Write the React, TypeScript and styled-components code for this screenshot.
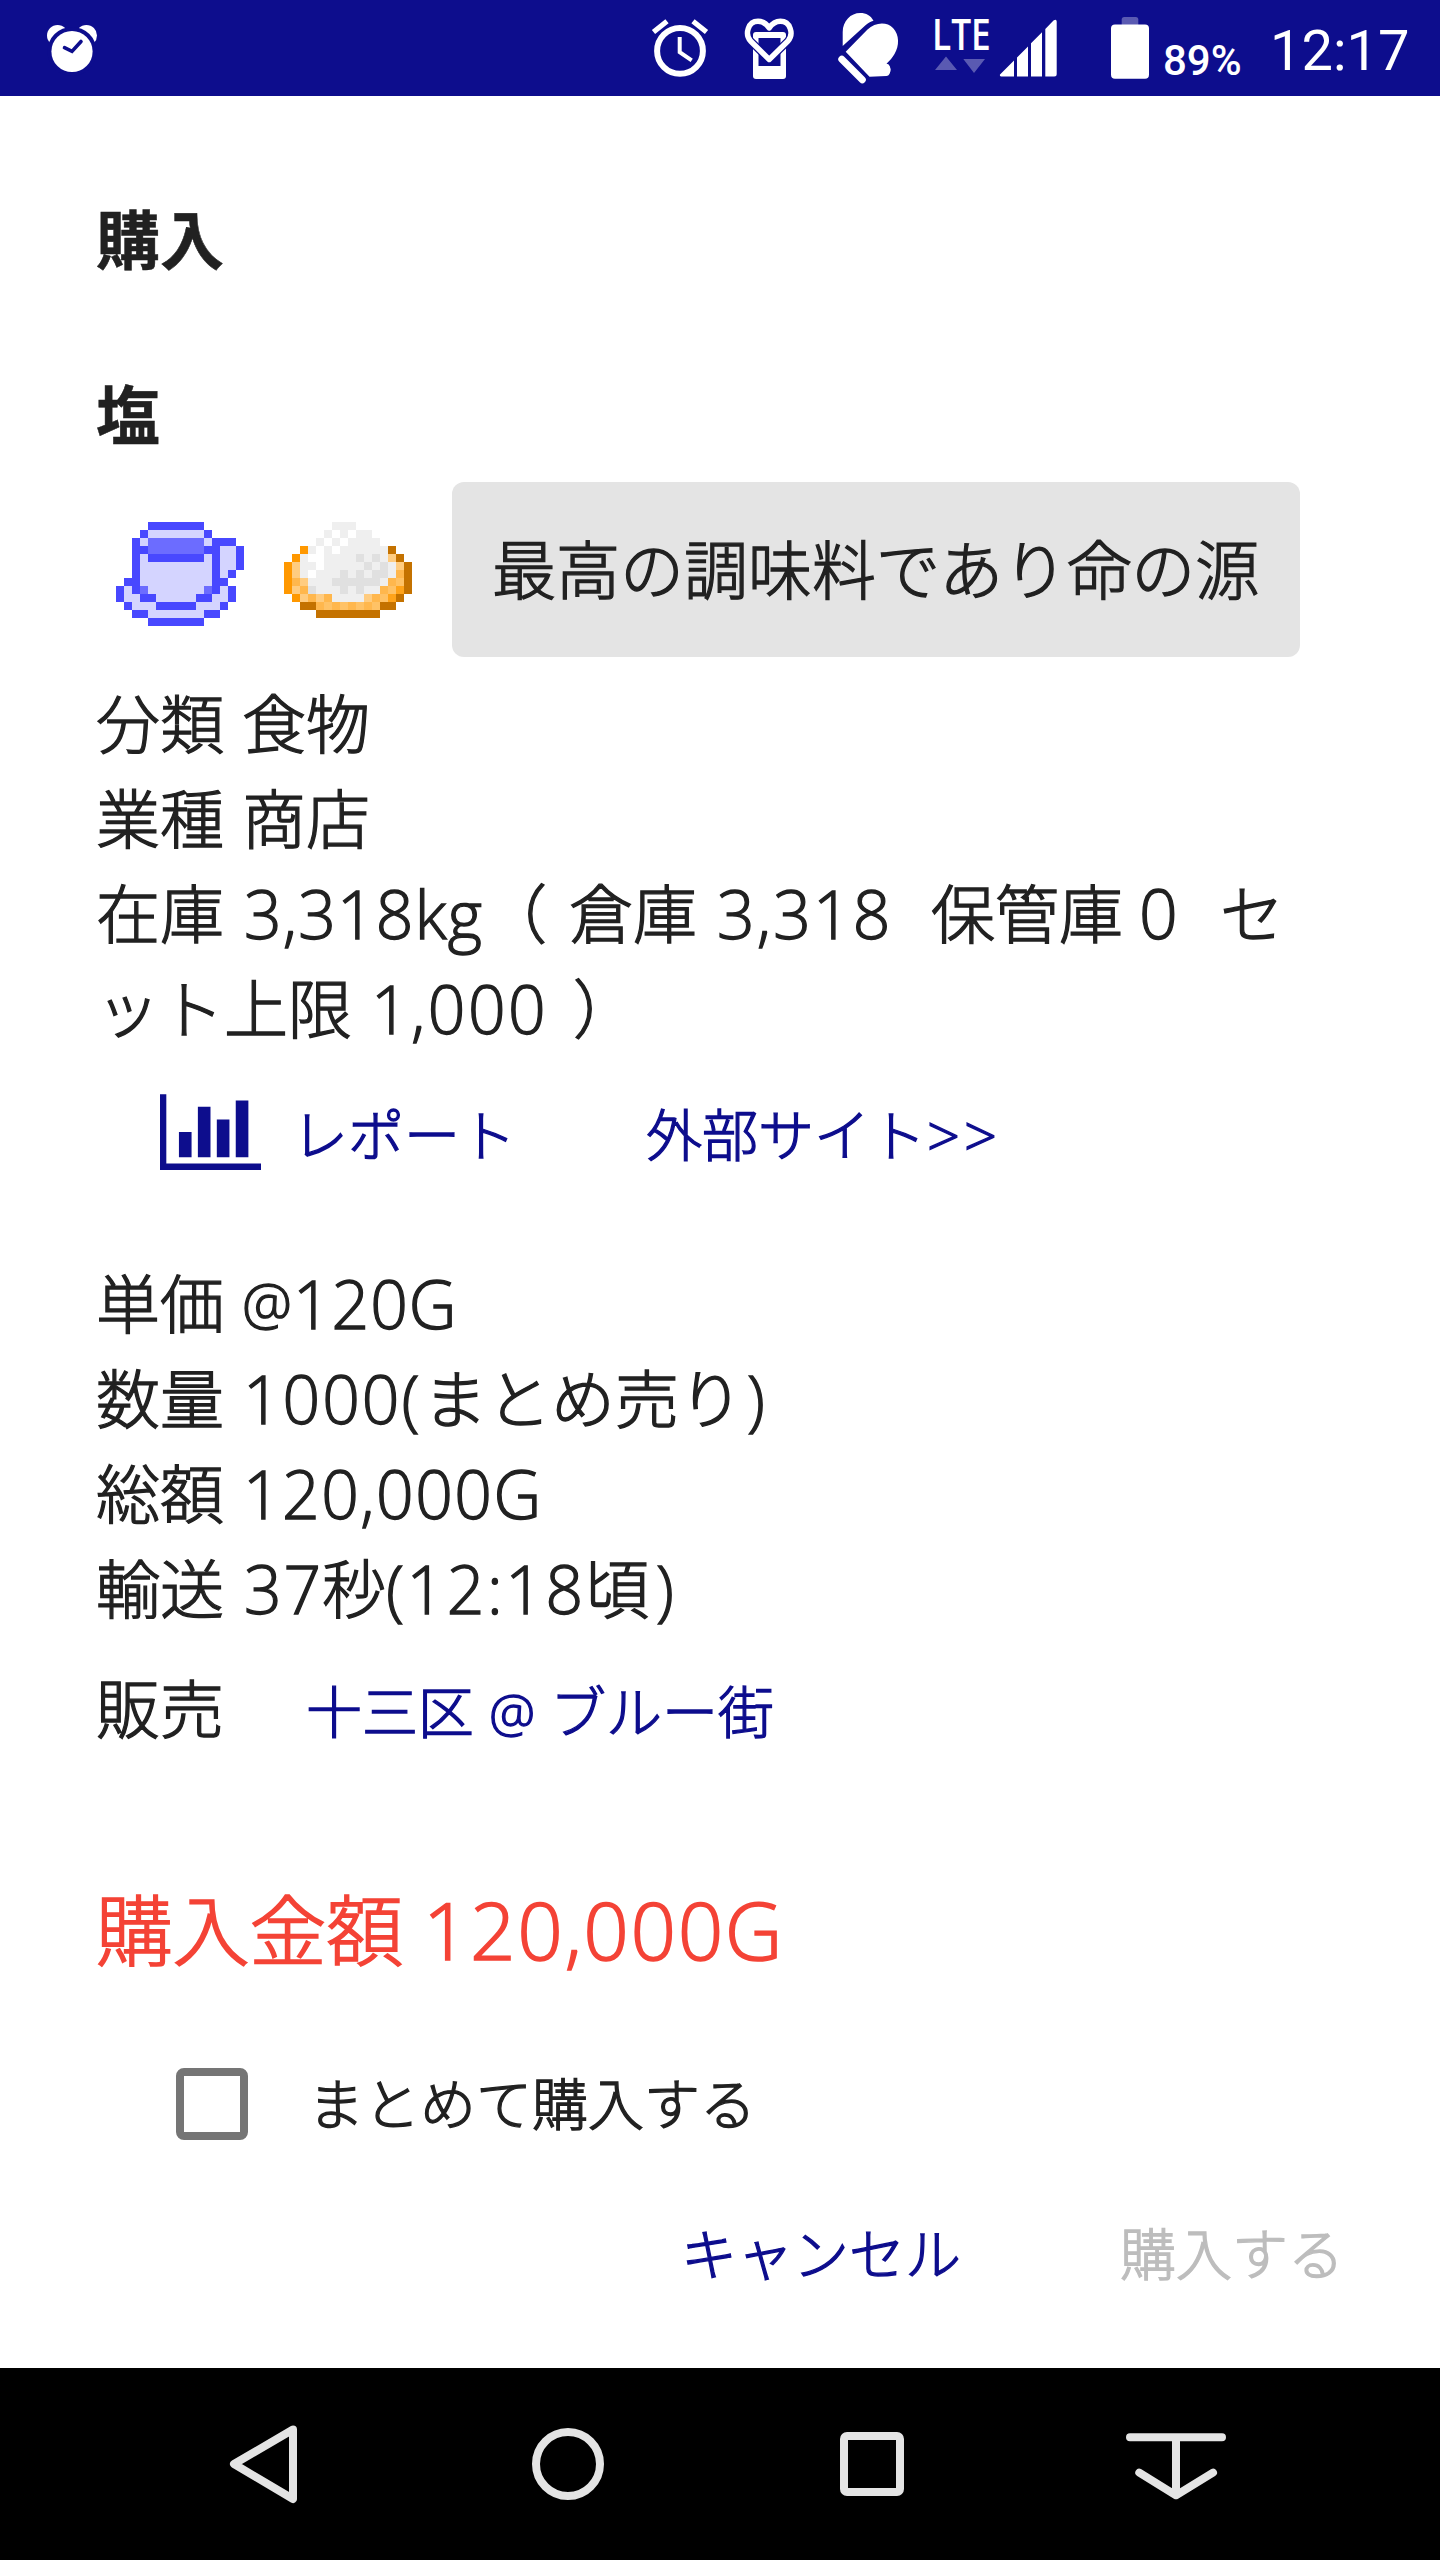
import React from 'react';
import styled, { createGlobalStyle } from 'styled-components';

const INK = '#212121';
const NAVY = '#0d0d8d';
const FAINT = '#5a5ab2';

const GlobalStyle = createGlobalStyle`
  * { box-sizing: border-box; }
  body { margin: 0; background: #fff; }
`;

const Screen = styled.div`
  display: flex;
  flex-direction: column;
  width: 1440px;
  height: 2560px;
  background: #fff;
  color: ${INK};
  font-family: 'Noto Sans CJK JP', sans-serif;
  font-weight: 300;
`;

/* ---------- status bar ---------- */

const StatusBar = styled.header`
  display: flex;
  height: 96px;
  padding: 0 30px 0 40px;
  background: ${NAVY};
  color: #fff;
  font-family: Roboto, sans-serif;
`;

const StatusIcon = styled.svg<{ $gap?: number }>`
  display: block;
  flex: none;
  margin-left: ${(p) => p.$gap ?? 0}px;
`;

const Spacer = styled.div`
  flex: 1;
`;

const Network = styled.div`
  display: flex;
  flex-direction: column;
  width: 60px;
  margin-left: 24px;
  padding-top: 14px;
`;

const NetworkType = styled.span`
  height: 42px;
  font: 600 43px/40px 'Open Sans', sans-serif;
  transform: scaleX(0.82);
  transform-origin: 0 50%;
  white-space: nowrap;
`;

const Percent = styled.span`
  width: 80px;
  margin-left: 11px;
  padding-top: 36px;
  font-size: 42px;
  font-weight: 500;
  line-height: 50px;
`;

const Clock = styled.span`
  width: 140px;
  margin-left: 27px;
  padding-top: 21px;
  font-size: 56px;
  font-weight: 400;
  line-height: 60px;
  white-space: nowrap;
`;

/* ---------- dialog ---------- */

const Dialog = styled.main`
  display: flex;
  flex-direction: column;
  height: 2272px;
  padding: 92px 96px 0;
  -webkit-text-stroke: 1.3px currentColor;
`;

const Heading = styled.h1<{ $gap?: number }>`
  margin: ${(p) => p.$gap ?? 0}px 0 0;
  font-size: 64px;
  font-weight: 700;
  line-height: 96px;
  -webkit-text-stroke: 0.5px currentColor;
`;

const ItemRow = styled.div`
  display: flex;
  align-items: flex-start;
  height: 175px;
  margin-top: 23px;
  padding-left: 20px;
`;

const Sprite = styled.svg`
  display: block;
  flex: none;
  width: 128px;
  height: 104px;
  margin: 40px 40px 0 0;
`;

const Note = styled.p`
  width: 848px;
  height: 175px;
  margin: 0;
  padding: 0 40px;
  border-radius: 12px;
  background: #e4e4e4;
  font-size: 64px;
  line-height: 168px;
  white-space: nowrap;
`;

const Details = styled.div<{ $gap: number }>`
  margin-top: ${(p) => p.$gap}px;
`;

const Line = styled.div`
  display: flex;
  height: 95px;
  font-size: 64px;
  line-height: 95px;
  white-space: nowrap;
`;

const Num = styled.span<{ $w?: number; $pad?: number; $track?: number; $size?: number }>`
  flex: none;
  width: ${(p) => (p.$w ? `${p.$w}px` : 'auto')};
  padding-top: 3px;
  padding-left: ${(p) => p.$pad ?? 0}px;
  font-family: 'Open Sans', 'Noto Sans CJK JP', sans-serif;
  font-size: ${(p) => p.$size ?? 1.03}em;
  letter-spacing: ${(p) => p.$track ?? 2}px;
`;

const LinkRow = styled.div`
  display: flex;
  align-items: center;
  height: 96px;
  margin-top: 31px;
  padding-left: 64px;
`;

const ChartIcon = styled.svg`
  display: block;
  width: 101px;
  height: 76px;
`;

const Anchor = styled.a<{ $gap: number }>`
  display: flex;
  height: 104px;
  margin-left: ${(p) => p.$gap}px;
  color: ${NAVY};
  font-size: 56px;
  line-height: 103px;
  white-space: nowrap;
`;

const SellerRow = styled.div`
  display: flex;
  height: 96px;
  margin-top: 24px;
  font-size: 64px;
  line-height: 96px;
`;

const Total = styled.div`
  display: flex;
  height: 115px;
  margin-top: 116px;
  color: #f44336;
  font-size: 76.8px;
  line-height: 115px;
  white-space: nowrap;
  -webkit-text-stroke: 1.7px currentColor;
`;

const CheckRow = styled.label`
  display: flex;
  align-items: center;
  height: 96px;
  margin-top: 72px;
  padding-left: 80px;
  font-size: 56px;
  line-height: 90px;
`;

const CheckBox = styled.span`
  width: 72px;
  height: 72px;
  margin-right: 60px;
  border: 8px solid #757575;
  border-radius: 8px;
`;

const CheckText = styled.span`
  margin-top: -6px;
`;

const Actions = styled.div`
  display: flex;
  justify-content: flex-end;
  gap: 159px;
  margin-top: 51px;
`;

const Action = styled.button<{ $muted?: boolean }>`
  padding: 0;
  border: 0;
  background: none;
  color: ${(p) => (p.$muted ? '#bdbdbd' : NAVY)};
  font: inherit;
  font-size: 56px;
  line-height: 96px;
  -webkit-text-stroke: 1.3px currentColor;
`;

/* ---------- navigation bar ---------- */

const NavBar = styled.nav`
  display: grid;
  grid-template-columns: repeat(4, 304px);
  justify-content: center;
  place-items: center;
  height: 192px;
  background: #000;
`;

const NavIcon = styled.svg`
  display: block;
  width: 112px;
  height: 96px;
  fill: none;
  stroke: #e4e4e4;
  stroke-width: 8;
  stroke-linecap: round;
  stroke-linejoin: round;
`;

/* ---------- pixel art ---------- */

const CUP = [
  '....BBBBBBB.....',
  '...BLLLLLLLB....',
  '..BLMMMMMMMLBBB.',
  '..BBMMMMMMMBBLLB',
  '..BLBBBBBBBLBLLB',
  '..BLLLLLLLLLBLLB',
  '..BLLLLLLLLLBLB.',
  '.BBLLLLLLLLLBB..',
  'BLBMLLLLLLLMBLB.',
  'BLLBBLLLLLBBLLB.',
  '.BLLLBBBBBLLLB..',
  '..BBLLLLLLLBB...',
  '....BBBBBBB.....',
];

const SALT = [
  '......GGG.......',
  '.....GWGWGG.....',
  '....GWGWGGGG....',
  '..OGWGWGGGGGGK..',
  '.OGWWGGGGDGDGYK.',
  'OYGGWGGGGGDGDGYK',
  'OYGWGGGDGDGDDGPK',
  'OPYGGGDDDDDDGPQK',
  'OYPDGGGDGDGGPQRK',
  '.OYPYPGGGGYPQRK.',
  '..KKPQPQPQPQKK..',
  '....KKKKKKKK....',
];

const PALETTE: Record<string, string> = {
  B: '#4848ff',
  L: '#d4d4ff',
  M: '#6c6cff',
  G: '#efefef',
  W: '#ffffff',
  D: '#e0e0e0',
  O: '#ff9800',
  K: '#c47200',
  Y: '#ffcc80',
  P: '#ffb74d',
  Q: '#ffc266',
  R: '#ffa31a',
};

const PixelArt = ({ rows }: { rows: string[] }) => (
  <Sprite viewBox="0 0 16 13" shapeRendering="crispEdges">
    {rows.flatMap((row, y) =>
      [...row].map((c, x) =>
        c === '.' ? null : (
          <rect key={`${x}-${y}`} x={x} y={y} width="1" height="1" fill={PALETTE[c]} />
        ),
      ),
    )}
  </Sprite>
);

const HEART =
  'M769.2 59.5 750.5 41C744.5 34 748 21.3 758 21.3c5 0 8.500 2.700 11.200 6.700 2.700-4 6.200-6.700 11.200-6.700C790.500 21.300 794 34 788 41Z';

const Status = () => (
  <StatusBar>
    <StatusIcon width="64" height="96" viewBox="40 0 64 96">
      <circle cx="57.6" cy="35.6" r="10.6" fill="#fff" />
      <circle cx="86.4" cy="35.6" r="10.6" fill="#fff" />
      <circle cx="72" cy="51.5" r="24.6" fill={NAVY} />
      <circle cx="72" cy="51.5" r="20.6" fill="#fff" />
      <path d="M64.5 47.7 72 51.4 81 41.5" fill="none" stroke={NAVY} strokeWidth="3.6" strokeLinecap="round" />
    </StatusIcon>
    <Spacer />
    <StatusIcon width="72" height="96" viewBox="644 0 72 96" fill="none" stroke="#fff">
      <circle cx="680" cy="50.9" r="22.9" strokeWidth="6" />
      <path d="M679.7 37v15.2l12 8.2" strokeWidth="4" />
      <path d="M653.5 32 667 21.2M693 21.2 706.5 32" strokeWidth="5.2" />
    </StatusIcon>
    <StatusIcon $gap={17} width="72" height="96" viewBox="733 0 72 96">
      <rect x="753" y="32" width="33" height="47" rx="3" fill="#fff" />
      <path d="M758.5 38h22v28h-22z" fill={NAVY} />
      <path d={HEART} fill="none" stroke={NAVY} strokeWidth="8" />
      <path d="M758 32h23v5.500h-23z" fill="#fff" />
      <path d={HEART} fill="none" stroke="#fff" strokeWidth="5.400" strokeLinejoin="round" />
    </StatusIcon>
    <StatusIcon $gap={23} width="80" height="96" viewBox="828 0 80 96" fill="#fff">
      <path d="M842.7 46V32c0-11 8-19 17.500-19 6 0 10.500 2.500 13.300 7.700-3 1-5.500 2.300-8 4.600Z" />
      <path d="M845.7 51.7 867.500 29.600c7.500-7.500 19.500-8 25.500-1.600 6.500 6.500 6.500 18 1.500 26-2 3.500-4.500 6.500-8 9.800 5-0.200 5.500 12 0 12.300l-17 0.600Z" />
      <circle cx="884.7" cy="69.700" r="5.800" />
      <path d="M841.8 59.200 862.300 79.700" stroke="#fff" strokeWidth="7" strokeLinecap="round" />
    </StatusIcon>
    <Network>
      <NetworkType>LTE</NetworkType>
      <StatusIcon width="60" height="18" viewBox="932 59 60 18" fill={FAINT}>
        <path d="M946 59.500 957 73H935zM963.300 62H985L974 76z" />
      </StatusIcon>
    </Network>
    <StatusIcon $gap={4} width="64" height="96" viewBox="996 0 64 96" fill="#fff">
      <path d="M1000 74.500 1014 60.500V76.500H1001q-1.500-.6-1-2zM1017 57.500 1028 46.500V76.500H1017zM1031 43.200 1042 32.200V76.500H1031zM1045.300 29 1053.500 20.500q3-2 3.200 1V74q0 2.500-2.500 2.500H1045.300z" />
    </StatusIcon>
    <StatusIcon $gap={48} width="44" height="96" viewBox="1108 0 44 96">
      <path d="M1121.700 25v-5.500q0-2.500 2.500-2.500h11.600q2.500 0 2.500 2.500V25z" fill={FAINT} />
      <rect x="1111" y="24.500" width="38" height="54.300" rx="4" fill="#fff" />
    </StatusIcon>
    <Percent>89%</Percent>
    <Clock>12:17</Clock>
  </StatusBar>
);

const Navigation = () => (
  <NavBar>
    <NavIcon viewBox="208 2416 112 96">
      <path d="M293 2429.500 234 2464 293 2499z" />
    </NavIcon>
    <NavIcon viewBox="512 2416 112 96">
      <circle cx="568" cy="2464" r="32" />
    </NavIcon>
    <NavIcon viewBox="816 2416 112 96">
      <rect x="844" y="2436" width="56" height="56" rx="3" />
    </NavIcon>
    <NavIcon viewBox="1120 2416 112 96">
      <path d="M1130 2437.300h92M1176 2438v55M1139.300 2472.700 1176 2495.300 1213 2472.700" />
    </NavIcon>
  </NavBar>
);

export default function App() {
  return (
    <Screen>
      <GlobalStyle />
      <Status />
      <Dialog>
        <Heading>購入</Heading>
        <Heading as="h2" $gap={79}>塩</Heading>
        <ItemRow>
          <PixelArt rows={CUP} />
          <PixelArt rows={SALT} />
          <Note>最高の調味料であり命の源</Note>
        </ItemRow>
        <Details $gap={16}>
          <Line>分類<Num $w={18} />食物</Line>
          <Line>業種<Num $w={18} />商店</Line>
          <Line>
            在庫<Num $w={259} $pad={20} $track={1.2}>3,318kg</Num>（<Num $w={22} />倉庫
            <Num $w={234} $pad={20} $track={2.2}>3,318</Num>保管庫<Num $w={97} $pad={16} $size={1.06}>0</Num>セ
          </Line>
          <Line>
            ット上限<Num $w={221} $pad={19} $track={2.5}>1,000</Num>）
          </Line>
        </Details>
        <LinkRow>
          <ChartIcon viewBox="0 0 2048 1536" fill={NAVY}>
            <path d="M640 768v512H384V768zM1024 256v1024H768V256zM2048 1408v128H0V0h128v1408zM1408 512v768h-256V512zM1792 128v1152h-256V128z" />
          </ChartIcon>
          <Anchor $gap={31}>レポート</Anchor>
          <Anchor $gap={130}>外部サイト<Num $pad={1} $track={4}>&gt;&gt;</Num></Anchor>
        </LinkRow>
        <Details $gap={73}>
          <Line>
            単価<Num $w={69} $pad={18} $size={0.88}>@</Num><Num $track={1}>120G</Num>
          </Line>
          <Line>
            数量<Num $w={199} $pad={19}>1000(</Num>まとめ売り<Num $pad={4}>)</Num>
          </Line>
          <Line>総額<Num $pad={19} $track={1.5}>120,000G</Num></Line>
          <Line>
            輸送<Num $w={98} $pad={20}>37</Num>秒<Num $w={199} $track={2.6}>(12:18</Num>頃
            <Num $pad={7}>)</Num>
          </Line>
        </Details>
        <SellerRow>
          販売
          <Anchor $gap={82}>
            十三区<Num $w={76} $pad={15} $size={0.93}>@</Num>ブルー街
          </Anchor>
        </SellerRow>
        <Total>購入金額<Num $pad={20} $track={2}>120,000G</Num></Total>
        <CheckRow>
          <CheckBox />
          <CheckText>まとめて購入する</CheckText>
        </CheckRow>
        <Actions>
          <Action>キャンセル</Action>
          <Action $muted>購入する</Action>
        </Actions>
      </Dialog>
      <Navigation />
    </Screen>
  );
}
